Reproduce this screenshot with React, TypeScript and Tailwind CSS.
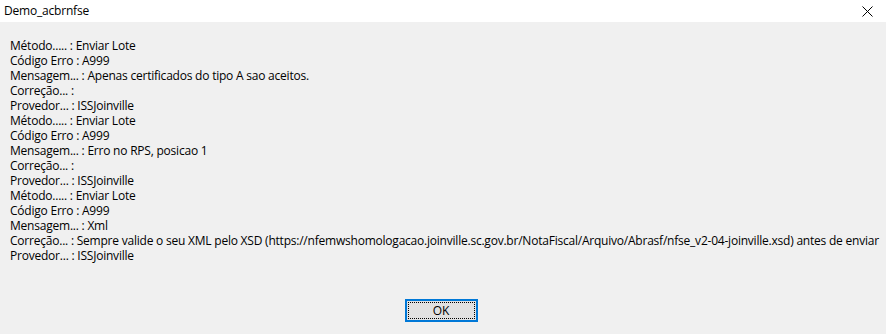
const lines = [
  "Método..... : Enviar Lote",
  "Código Erro : A999",
  "Mensagem... : Apenas certificados do tipo A sao aceitos.",
  "Correção... :",
  "Provedor... : ISSJoinville",
  "Método..... : Enviar Lote",
  "Código Erro : A999",
  "Mensagem... : Erro no RPS, posicao 1",
  "Correção... :",
  "Provedor... : ISSJoinville",
  "Método..... : Enviar Lote",
  "Código Erro : A999",
  "Mensagem... : Xml",
  "Correção... : Sempre valide o seu XML pelo XSD (https://nfemwshomologacao.joinville.sc.gov.br/NotaFiscal/Arquivo/Abrasf/nfse_v2-04-joinville.xsd) antes de enviar",
  "Provedor... : ISSJoinville",
];

export default function App() {
  return (
    <div className="w-[886px] h-[334px] flex flex-col bg-[#f0f0f0] font-['Open_Sans',sans-serif] text-black overflow-hidden">
      <div className="h-[22px] bg-white flex items-center justify-between pl-[4px] pr-[12px]">
        <span className="text-[12px] tracking-[-0.2px]">Demo_acbrnfse</span>
        <svg width="11" height="11" viewBox="0 0 11 11" className="mr-[1px]">
          <path d="M0.5 0.5L10.5 10.5M10.5 0.5L0.5 10.5" stroke="#000" strokeWidth="1" />
        </svg>
      </div>
      <div className="pt-[16px] pl-[10px] flex flex-col">
        {lines.map((l, i) => (
          <div key={i} className="h-[15px] leading-[15px] text-[12px] tracking-[-0.22px] whitespace-nowrap">
            {l}
          </div>
        ))}
      </div>
      <div className="flex justify-center mt-[36px] pr-[4px]">
        <button className="w-[73px] h-[23px] border-2 border-[#0078d7] bg-[#e1e1e1] p-[1px]">
          <div className="w-full h-full border border-dotted border-black flex items-center justify-center text-[12px]">
            OK
          </div>
        </button>
      </div>
    </div>
  );
}
